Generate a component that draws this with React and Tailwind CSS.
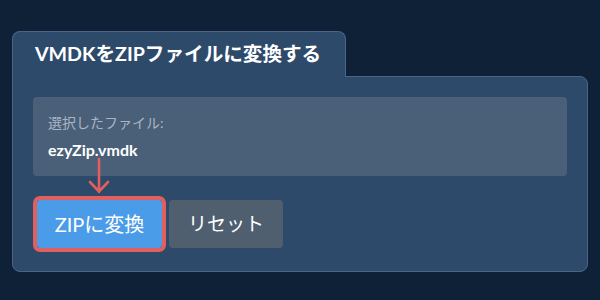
const ArrowMark = () => (
  <svg
    className="absolute left-[88px] top-[157px]"
    width="22"
    height="38"
    viewBox="0 0 22 38"
    fill="none"
  >
    <path
      d="M11 2 V35 M2 25 L11 34.5 L20 25"
      stroke="#e15f5c"
      strokeWidth="2.6"
      strokeLinecap="round"
      strokeLinejoin="round"
    />
  </svg>
);

export default function App() {
  return (
    <div
      className="relative w-[600px] h-[300px] bg-[#0f2137] pt-[31px] pl-[12px]"
      style={{ fontFamily: 'Lato, "Noto Sans CJK JP", sans-serif' }}
    >
      <div className="w-[576px]">
        <div className="relative z-10 -mb-px flex h-[46px] w-[334px] items-center rounded-t-lg border border-b-0 border-[#4b6587] bg-[#2d4a6a] pl-[22px] pb-px">
          <h1 className="text-[19.6px] font-bold leading-none text-white">
            VMDKをZIPファイルに変換する
          </h1>
        </div>
        <div className="rounded-b-lg rounded-tr-lg border border-[#4b6587] bg-[#2d4a6a] px-5 pt-5 pb-[23px]">
          <div className="rounded bg-[#4a5f78] px-[15px] py-4">
            <p className="text-[14px] leading-[20px] text-[#a9b5c4]">選択したファイル:</p>
            <p className="mt-[7px] text-[16px] font-bold leading-[20px] text-white">ezyZip.vmdk</p>
          </div>
          <div className="mt-6 flex gap-[7px] pl-1">
            <button className="h-[48px] w-[125px] rounded-[3px] bg-[#4b9ce8] text-[20px] text-white outline-4 outline-[#e15f5c]">
              ZIPに変換
            </button>
            <button className="h-[48px] w-[114px] rounded bg-[#4f5f70] text-[19px] text-white">
              リセット
            </button>
          </div>
        </div>
      </div>
      <ArrowMark />
    </div>
  );
}
